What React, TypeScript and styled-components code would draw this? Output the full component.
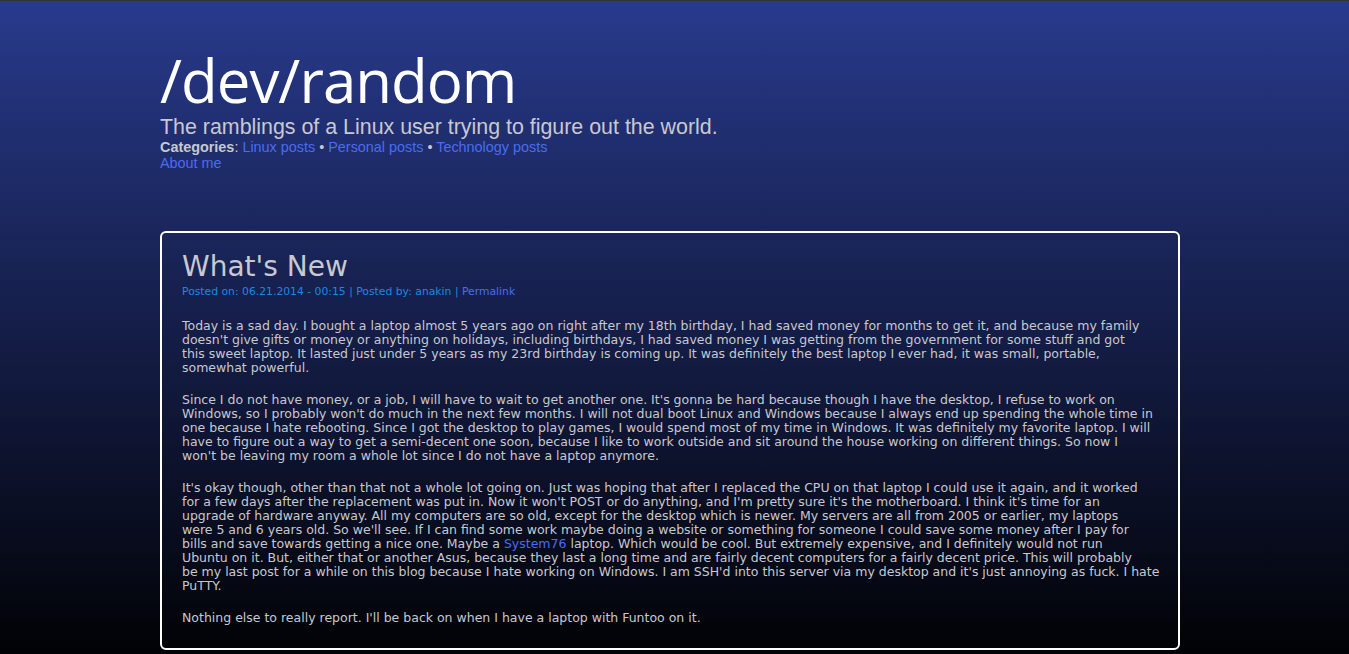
import React from "react";
import styled, { createGlobalStyle } from "styled-components";

const GlobalStyle = createGlobalStyle`
  html {
    background-color: #000;
    background-image: linear-gradient(to bottom, #283a8c 0px, #1a265c 230px, #000 680px);
    background-repeat: no-repeat;
    min-height: 100%;
  }
  body {
    margin: 0;
    border-top: 1px solid #333;
    font-family: "Liberation Sans", Arial, sans-serif;
    color: #c8c8d0;
  }
`;

const Page = styled.div`
  padding: 0 0 0 160px;
`;

const Header = styled.header`
  padding-top: 44px;
  display: flex;
  flex-direction: column;
`;

const SiteTitle = styled.h1`
  margin: 0;
  font-family: "Open Sans", sans-serif;
  font-weight: 400;
  font-size: 60px;
  line-height: 70px;
  color: #fff;
  letter-spacing: -1px;
`;

const Tagline = styled.p`
  margin: 0;
  font-size: 21.4px;
  line-height: 24px;
  color: #c8c8d0;
`;

const NavLine = styled.div`
  font-size: 14.4px;
  line-height: 16px;
  color: #c8c8d0;
`;

const Label = styled.b`
  font-weight: 700;
`;

const Link = styled.a`
  color: #4a6cf0;
  text-decoration: none;
`;

const Post = styled.article`
  margin-top: 60px;
  width: 1020px;
  box-sizing: border-box;
  border: 2px solid #fff;
  border-radius: 6px;
  padding: 16px 10px 23px 20px;
  font-family: "DejaVu Sans", sans-serif;
`;

const PostTitle = styled.h2`
  margin: 0;
  font-weight: 400;
  font-size: 28px;
  line-height: 36px;
  color: #c8c8d0;
`;

const Meta = styled.div`
  font-size: 10.8px;
  line-height: 14px;
  color: #1a8ae0;
  margin-bottom: 20px;
`;

const Body = styled.p`
  margin: 0 0 18px;
  font-size: 12.5px;
  line-height: 14px;
  color: #c8c8d0;
  &:last-child { margin-bottom: 0; }
`;

const Line = styled.span`
  display: block;
`;

const paragraphs: React.ReactNode[][] = [
  [
    "Today is a sad day. I bought a laptop almost 5 years ago on right after my 18th birthday, I had saved money for months to get it, and because my family",
    "doesn't give gifts or money or anything on holidays, including birthdays, I had saved money I was getting from the government for some stuff and got",
    "this sweet laptop. It lasted just under 5 years as my 23rd birthday is coming up. It was definitely the best laptop I ever had, it was small, portable,",
    "somewhat powerful.",
  ],
  [
    "Since I do not have money, or a job, I will have to wait to get another one. It's gonna be hard because though I have the desktop, I refuse to work on",
    "Windows, so I probably won't do much in the next few months. I will not dual boot Linux and Windows because I always end up spending the whole time in",
    "one because I hate rebooting. Since I got the desktop to play games, I would spend most of my time in Windows. It was definitely my favorite laptop. I will",
    "have to figure out a way to get a semi-decent one soon, because I like to work outside and sit around the house working on different things. So now I",
    "won't be leaving my room a whole lot since I do not have a laptop anymore.",
  ],
  [
    "It's okay though, other than that not a whole lot going on. Just was hoping that after I replaced the CPU on that laptop I could use it again, and it worked",
    "for a few days after the replacement was put in. Now it won't POST or do anything, and I'm pretty sure it's the motherboard. I think it's time for an",
    "upgrade of hardware anyway. All my computers are so old, except for the desktop which is newer. My servers are all from 2005 or earlier, my laptops",
    "were 5 and 6 years old. So we'll see. If I can find some work maybe doing a website or something for someone I could save some money after I pay for",
    <>
      bills and save towards getting a nice one. Maybe a <Link href="#">System76</Link> laptop. Which would be cool. But extremely expensive, and I definitely would not run
    </>,
    "Ubuntu on it. But, either that or another Asus, because they last a long time and are fairly decent computers for a fairly decent price. This will probably",
    "be my last post for a while on this blog because I hate working on Windows. I am SSH'd into this server via my desktop and it's just annoying as fuck. I hate",
    "PuTTY.",
  ],
  ["Nothing else to really report. I'll be back on when I have a laptop with Funtoo on it."],
];

export default function App() {
  return (
    <>
      <GlobalStyle />
      <Page>
        <Header>
          <SiteTitle>/dev/random</SiteTitle>
          <Tagline>The ramblings of a Linux user trying to figure out the world.</Tagline>
          <NavLine>
            <Label>Categories</Label>: <Link href="#">Linux posts</Link> • <Link href="#">Personal posts</Link> • <Link href="#">Technology posts</Link>
          </NavLine>
          <NavLine>
            <Link href="#">About me</Link>
          </NavLine>
        </Header>
        <Post>
          <PostTitle>What's New</PostTitle>
          <Meta>
            Posted on: 06.21.2014 - 00:15 | Posted by: anakin | <Link href="#">Permalink</Link>
          </Meta>
          {paragraphs.map((lines, i) => (
            <Body key={i}>
              {lines.map((line, j) => (
                <Line key={j}>{line}</Line>
              ))}
            </Body>
          ))}
        </Post>
      </Page>
    </>
  );
}
